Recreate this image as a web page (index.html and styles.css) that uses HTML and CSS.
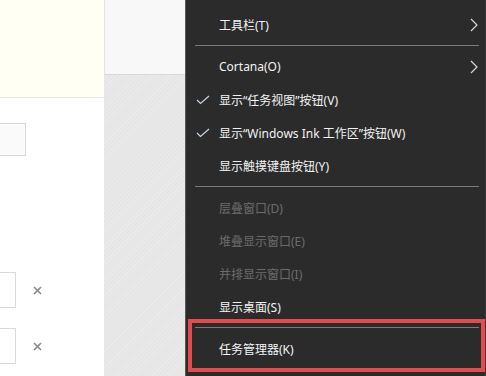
FILE: index.html
```html
<!DOCTYPE html>
<html lang="zh-CN">
<head>
<meta charset="utf-8">
<link rel="stylesheet" href="styles.css">
</head>
<body>
<div class="screen">
  <div class="left">
    <div class="notice"></div>
    <div class="form">
      <div class="field wide"></div>
      <div class="row row-a"><div class="field narrow"></div><svg class="close" width="9" height="9" viewBox="0 0 9 9"><path d="M1 1L8 8M8 1L1 8" stroke="#8a8a8a" stroke-width="1.7" fill="none"/></svg></div>
      <div class="row row-b"><div class="field narrow"></div><svg class="close" width="9" height="9" viewBox="0 0 9 9"><path d="M1 1L8 8M8 1L1 8" stroke="#8a8a8a" stroke-width="1.7" fill="none"/></svg></div>
    </div>
  </div>
  <div class="middle">
    <div class="panel"></div>
    <div class="texture"></div>
  </div>
  <div class="menu">
    <div class="item"><span class="label">工具栏(T)</span><svg class="chev" width="8" height="14" viewBox="0 0 8 14"><polyline points="1,1 7,7 1,13" fill="none" stroke="#d8d8d8" stroke-width="1.2"/></svg></div>
    <div class="sep"></div>
    <div class="item"><span class="label">Cortana(O)</span><svg class="chev" width="8" height="14" viewBox="0 0 8 14"><polyline points="1,1 7,7 1,13" fill="none" stroke="#d8d8d8" stroke-width="1.2"/></svg></div>
    <div class="item"><svg class="check" width="14" height="10" viewBox="0 0 14 10"><polyline points="1,5 4.5,8.5 13,1" fill="none" stroke="#c8d4e8" stroke-width="1.2"/></svg><span class="label">显示“任务视图”按钮(V)</span></div>
    <div class="item"><svg class="check" width="14" height="10" viewBox="0 0 14 10"><polyline points="1,5 4.5,8.5 13,1" fill="none" stroke="#c8d4e8" stroke-width="1.2"/></svg><span class="label">显示“Windows Ink 工作区”按钮(W)</span></div>
    <div class="item"><span class="label">显示触摸键盘按钮(Y)</span></div>
    <div class="sep"></div>
    <div class="item disabled"><span class="label">层叠窗口(D)</span></div>
    <div class="item disabled"><span class="label">堆叠显示窗口(E)</span></div>
    <div class="item disabled"><span class="label">并排显示窗口(I)</span></div>
    <div class="item"><span class="label">显示桌面(S)</span></div>
    <div class="sep"></div>
    <div class="item"><span class="label">任务管理器(K)</span></div>
    <div class="highlight"></div>
  </div>
</div>
</body>
</html>
```

FILE: styles.css
```css
* { box-sizing: border-box; }
html, body { margin: 0; padding: 0; }
body {
  width: 486px;
  height: 376px;
  overflow: hidden;
  background: #fff;
  font-family: "Noto Sans", "Noto Sans CJK SC", sans-serif;
}
.screen {
  display: flex;
  width: 486px;
  height: 376px;
}
.left {
  width: 104px;
  display: flex;
  flex-direction: column;
  background: #fff;
}
.notice {
  height: 98px;
  background: #fffff4;
  border-bottom: 1px solid #ebebe3;
}
.form {
  position: relative;
  flex: 1;
  padding-top: 25px;
}
.field {
  height: 33px;
  border: 1px solid #d9d9d9;
  border-left: none;
  background: #fafafa;
}
.wide { width: 26px; }
.narrow { width: 16px; background: #fff; height: 36px; }
.row {
  display: flex;
  align-items: center;
}
.row-a { margin-top: 116px; }
.row-b { margin-top: 20px; }
.close {
  margin-left: 17px;
  display: block;
}
.middle {
  width: 81px;
  display: flex;
  flex-direction: column;
}
.panel {
  height: 75px;
  background: #f8f8f8;
  border-left: 1px solid #e4e4e4;
  border-bottom: 1px solid #d8d8d8;
}
.texture {
  flex: 1;
  background-color: #e6e6e6;
  background-image:
    repeating-linear-gradient(135deg, rgba(255,255,255,0.18) 0 1px, transparent 1px 3px);
}
.menu {
  position: relative;
  width: 301px;
  background: #2b2b2b;
  border-left: 1px solid #5a5a5a;
  border-right: 1px solid #3a3a3a;
  padding-top: 8px;
  display: flex;
  flex-direction: column;
}
.item {
  position: relative;
  height: 33px;
  display: flex;
  align-items: center;
  padding-left: 33px;
  padding-right: 7px;
  color: #f2f2f2;
  font-size: 12px;
}
.item.disabled { color: #6b6b6b; }
.label { flex: 1; white-space: nowrap; }
.check {
  position: absolute;
  left: 10px;
  top: 12px;
}
.chev { flex: none; }
.sep {
  height: 9px;
  display: flex;
  align-items: center;
  padding: 0 6px 0 9px;
}
.sep::before {
  content: "";
  flex: 1;
  height: 1px;
  background: #7a7a7a;
}
.highlight {
  position: absolute;
  left: 2px;
  top: 319px;
  width: 297px;
  height: 53px;
  border: 4px solid #e44b4b;
}
```
